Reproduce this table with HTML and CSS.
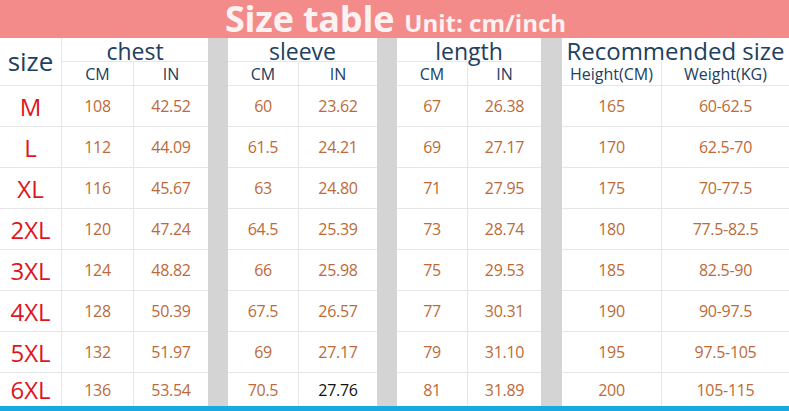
FILE: index.html
```html
<!DOCTYPE html>
<html lang="en">
<head>
<meta charset="utf-8">
<title>Size table</title>
<link rel="stylesheet" href="styles.css">
</head>
<body>
<div class="table">
  <div class="title"><span class="t-main">Size table</span><span class="t-unit">Unit: cm/inch</span></div>

  <div class="band band-1"></div>
  <div class="band band-2"></div>
  <div class="band band-3"></div>

  <div class="cell size-head">size</div>
  <div class="cell group">chest</div>
  <div class="cell group">sleeve</div>
  <div class="cell group">length</div>
  <div class="cell group rec">Recommended size</div>

  <div class="cell sub vl">CM</div><div class="cell sub">IN</div>
  <div class="cell sub vl">CM</div><div class="cell sub">IN</div>
  <div class="cell sub vl">CM</div><div class="cell sub">IN</div>
  <div class="cell sub vl">Height(CM)</div><div class="cell sub">Weight(KG)</div>

  <div class="cell lbl">M</div><div class="cell num vl">108</div><div class="cell num">42.52</div><div class="cell num vl">60</div><div class="cell num">23.62</div><div class="cell num vl">67</div><div class="cell num">26.38</div><div class="cell num vl">165</div><div class="cell num">60-62.5</div>
  <div class="cell lbl">L</div><div class="cell num vl">112</div><div class="cell num">44.09</div><div class="cell num vl">61.5</div><div class="cell num">24.21</div><div class="cell num vl">69</div><div class="cell num">27.17</div><div class="cell num vl">170</div><div class="cell num">62.5-70</div>
  <div class="cell lbl">XL</div><div class="cell num vl">116</div><div class="cell num">45.67</div><div class="cell num vl">63</div><div class="cell num">24.80</div><div class="cell num vl">71</div><div class="cell num">27.95</div><div class="cell num vl">175</div><div class="cell num">70-77.5</div>
  <div class="cell lbl">2XL</div><div class="cell num vl">120</div><div class="cell num">47.24</div><div class="cell num vl">64.5</div><div class="cell num">25.39</div><div class="cell num vl">73</div><div class="cell num">28.74</div><div class="cell num vl">180</div><div class="cell num">77.5-82.5</div>
  <div class="cell lbl">3XL</div><div class="cell num vl">124</div><div class="cell num">48.82</div><div class="cell num vl">66</div><div class="cell num">25.98</div><div class="cell num vl">75</div><div class="cell num">29.53</div><div class="cell num vl">185</div><div class="cell num">82.5-90</div>
  <div class="cell lbl">4XL</div><div class="cell num vl">128</div><div class="cell num">50.39</div><div class="cell num vl">67.5</div><div class="cell num">26.57</div><div class="cell num vl">77</div><div class="cell num">30.31</div><div class="cell num vl">190</div><div class="cell num">90-97.5</div>
  <div class="cell lbl">5XL</div><div class="cell num vl">132</div><div class="cell num">51.97</div><div class="cell num vl">69</div><div class="cell num">27.17</div><div class="cell num vl">79</div><div class="cell num">31.10</div><div class="cell num vl">195</div><div class="cell num">97.5-105</div>
  <div class="cell lbl last">6XL</div><div class="cell num vl last">136</div><div class="cell num last">53.54</div><div class="cell num vl last">70.5</div><div class="cell num last black">27.76</div><div class="cell num vl last">81</div><div class="cell num last">31.89</div><div class="cell num vl last">200</div><div class="cell num last">105-115</div>

  <div class="bottom-bar"></div>
</div>
</body>
</html>
```
FILE: styles.css
```css
* { box-sizing: border-box; }
html, body { margin: 0; padding: 0; background: #ffffff; }
body { font-family: "Open Sans", "Noto Sans", sans-serif; }

.table {
  display: grid;
  width: 789px;
  height: 411px;
  overflow: hidden;
  grid-template-columns: 62px 72px 74px 20px 71px 78px 20px 71px 73px 21px 100px 127px;
  grid-template-rows: 38px 24px 24px repeat(7, 41px) 33px 5px;
  background: #ffffff;
}

.title {
  grid-column: 1 / -1;
  grid-row: 1;
  display: flex;
  justify-content: center;
  align-items: baseline;
  background: #f38b8b;
  color: #fdf2f2;
  font-weight: 700;
  line-height: 38px;
  white-space: nowrap;
  padding-left: 2px;
}
.t-main { font-size: 36px; letter-spacing: -0.2px; }
.t-unit { font-size: 24px; margin-left: 10px; }

.band { background: #d4d4d4; grid-row: 2 / span 10; }
.band-1 { grid-column: 4; }
.band-2 { grid-column: 7; }
.band-3 { grid-column: 10; }

.cell {
  display: flex;
  align-items: center;
  justify-content: center;
  white-space: nowrap;
  border-bottom: 1px solid #e6e6e6;
}
.vl { border-right: 1px solid #e6e6e6; }

.size-head {
  grid-row: span 2;
  border-right: 1px solid #e6e6e6;
  color: #21405e;
  font-size: 26px;
  padding-bottom: 2px;
}

.group {
  grid-column: span 2;
  color: #21405e;
  font-size: 23px;
  line-height: 24px;
  align-items: flex-start;
  padding-top: 1px;
}
.rec { border-bottom: none; font-size: 24px; }

.sub {
  color: #21405e;
  font-size: 16px;
}

.lbl {
  border-right: 1px solid #e6e6e6;
  color: #e0141c;
  font-size: 24px;
}

.num {
  color: #bd6a38;
  font-size: 16px;
  letter-spacing: -0.3px;
}
.black { color: #111111; }

.last { border-bottom: none; }

.bottom-bar {
  grid-column: 1 / -1;
  background: #17aae2;
}
```
